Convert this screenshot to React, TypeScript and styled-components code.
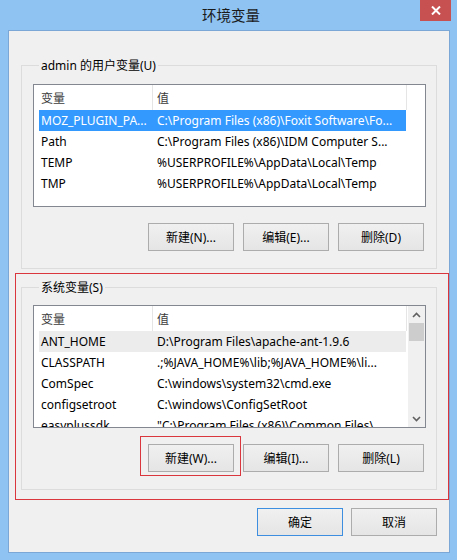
import React from "react";
import styled, { createGlobalStyle } from "styled-components";

const Global = createGlobalStyle`
  html, body { margin: 0; padding: 0; background: #ffffff; }
  body { font-family: "Noto Sans", "Noto Sans CJK SC", sans-serif; font-size: 12px; color: #000; }
  * { box-sizing: border-box; }
`;

const Window = styled.div`
  width: 457px;
  height: 560px;
  background: #8ec3f2;
  display: flex;
  flex-direction: column;
  padding: 0 7px 7px 8px;
`;

const TitleBar = styled.div`
  height: 30px;
  display: flex;
  align-items: flex-start;
  position: relative;
`;

const Title = styled.div`
  flex: 1;
  text-align: center;
  font-family: "Noto Sans CJK SC", sans-serif;
  font-size: 14.5px;
  line-height: 30px;
  color: #1a1a1a;
  padding-left: 4px;
`;

const CloseButton = styled.div`
  position: absolute;
  right: -1px;
  top: 0;
  width: 31px;
  height: 21px;
  background: #c75050;
  display: flex;
  align-items: center;
  justify-content: center;
`;

const Client = styled.div`
  flex: 1;
  background: #f0f0f0;
  border: 1px solid #7aa7d6;
  display: flex;
  flex-direction: column;
`;

const Group = styled.fieldset`
  margin: 0;
  min-inline-size: 0;
  border: 1px solid #dcdcdc;
  padding: 11px 10px 17px 11px;
  display: flex;
  flex-direction: column;
`;

const Legend = styled.legend`
  margin-left: 6px;
  padding: 2px 2px 0 2px;
  font-size: 12px;
  line-height: 14px;
  color: #000;
`;

const UserGroup = styled(Group)`
  margin: 26px 12px 0 12px;
`;

const Annotation = styled.div`
  border: 1px solid #d9363e;
`;

const SystemMark = styled(Annotation)`
  margin: 4px 0 0 6px;
  padding: 5px 11px 9px 5px;
`;

const ButtonMark = styled(Annotation)`
  margin: -8px -7px -4px -8px;
  padding: 7px 6px 3px 7px;
  display: flex;
`;

const SystemGroup = styled(Group)`
  padding-top: 10px;
`;

const ListView = styled.div`
  height: 123px;
  border: 1px solid #828790;
  background: #ffffff;
  display: flex;
  overflow: hidden;
`;

const ListMain = styled.div`
  flex: 1;
  display: flex;
  flex-direction: column;
  min-width: 0;
`;

const HeaderRow = styled.div`
  height: 25px;
  display: flex;
  flex-shrink: 0;
`;

const HeaderCell = styled.div<{ $w: number; $pad: number }>`
  width: ${(p) => p.$w}px;
  flex-shrink: 0;
  border-right: 1px solid #e5e5e5;
  padding-left: ${(p) => p.$pad}px;
  line-height: 25px;
  font-family: "Noto Sans CJK SC", sans-serif;
  font-size: 12px;
  color: #3c3c3c;
`;

const HeaderFill = styled.div`
  flex: 1;
`;

const Body = styled.div`
  flex: 1;
  overflow: hidden;
`;

const Row = styled.div<{ $state?: "selected" | "hover" }>`
  height: 21px;
  margin-left: 5px;
  width: 367px;
  display: flex;
  background: ${(p) =>
    p.$state === "selected" ? "#3399ff" : p.$state === "hover" ? "#ececec" : "transparent"};
  color: ${(p) => (p.$state === "selected" ? "#ffffff" : "#000000")};
`;

const Cell = styled.div<{ $w: number; $pad: number }>`
  width: ${(p) => p.$w}px;
  flex-shrink: 0;
  padding-left: ${(p) => p.$pad}px;
  padding-right: 4px;
  line-height: 21px;
  white-space: nowrap;
  overflow: hidden;
  text-overflow: ellipsis;
`;

const ScrollBar = styled.div`
  width: 17px;
  flex-shrink: 0;
  background: #f0f0f0;
  display: flex;
  flex-direction: column;
`;

const ScrollArrow = styled.div`
  height: 17px;
  display: flex;
  align-items: center;
  justify-content: center;
`;

const ScrollThumb = styled.div`
  height: 18px;
  margin: 0 1px;
  background: #cdcdcd;
`;

const ScrollTrack = styled.div`
  flex: 1;
`;

const ButtonRow = styled.div<{ $top: number; $right: number }>`
  display: flex;
  justify-content: flex-end;
  gap: 9px;
  margin-top: ${(p) => p.$top}px;
  padding-right: ${(p) => p.$right}px;
`;

const Button = styled.button<{ $default?: boolean }>`
  width: 86px;
  height: 28px;
  margin: 0;
  padding: 0;
  border: 1px solid ${(p) => (p.$default ? "#3d8ee0" : "#acacac")};
  background: linear-gradient(#f0f0f0, #e5e5e5);
  font-family: "Noto Sans", "Noto Sans CJK SC", sans-serif;
  font-size: 12px;
  color: #000;
  display: flex;
  align-items: center;
  justify-content: center;
`;

const DialogButtons = styled(ButtonRow)`
  gap: 8px;
`;

type Item = [string, string];

const userVars: Item[] = [
  ["MOZ_PLUGIN_PA...", "C:\\Program Files (x86)\\Foxit Software\\Fo..."],
  ["Path", "C:\\Program Files (x86)\\IDM Computer S..."],
  ["TEMP", "%USERPROFILE%\\AppData\\Local\\Temp"],
  ["TMP", "%USERPROFILE%\\AppData\\Local\\Temp"],
];

const systemVars: Item[] = [
  ["ANT_HOME", "D:\\Program Files\\apache-ant-1.9.6"],
  ["CLASSPATH", ".;%JAVA_HOME%\\lib;%JAVA_HOME%\\li..."],
  ["ComSpec", "C:\\windows\\system32\\cmd.exe"],
  ["configsetroot", "C:\\windows\\ConfigSetRoot"],
  ["easyplussdk", "\"C:\\Program Files (x86)\\Common Files\\..."],
];

const Chevron = ({ up }: { up: boolean }) => (
  <svg width="9" height="6" viewBox="0 0 9 6">
    <path
      d={up ? "M1 5 L4.5 1.5 L8 5" : "M1 1 L4.5 4.5 L8 1"}
      fill="none"
      stroke="#606060"
      strokeWidth="1.6"
    />
  </svg>
);

const VarList = ({
  items,
  highlight,
  state,
  scroll,
}: {
  items: Item[];
  highlight: number;
  state: "selected" | "hover";
  scroll?: boolean;
}) => (
  <ListView>
    <ListMain>
      <HeaderRow>
        <HeaderCell $w={119} $pad={7}>变量</HeaderCell>
        <HeaderCell $w={254} $pad={4}>值</HeaderCell>
        <HeaderFill />
      </HeaderRow>
      <Body>
        {items.map(([k, v], i) => (
          <Row key={k} $state={i === highlight ? state : undefined}>
            <Cell $w={113} $pad={2}>{k}</Cell>
            <Cell $w={254} $pad={5}>{v}</Cell>
          </Row>
        ))}
      </Body>
    </ListMain>
    {scroll && (
      <ScrollBar>
        <ScrollArrow>
          <Chevron up />
        </ScrollArrow>
        <ScrollThumb />
        <ScrollTrack />
        <ScrollArrow>
          <Chevron up={false} />
        </ScrollArrow>
      </ScrollBar>
    )}
  </ListView>
);

export default function App() {
  return (
    <>
      <Global />
      <Window>
        <TitleBar>
          <Title>环境变量</Title>
          <CloseButton>
            <svg width="10" height="9" viewBox="0 0 10 9">
              <path d="M1 0.5 L9 8.5 M9 0.5 L1 8.5" stroke="#ffffff" strokeWidth="2" />
            </svg>
          </CloseButton>
        </TitleBar>
        <Client>
          <UserGroup>
            <Legend>admin 的用户变量(U)</Legend>
            <VarList items={userVars} highlight={0} state="selected" />
            <ButtonRow $top={16} $right={2}>
              <Button>新建(N)...</Button>
              <Button>编辑(E)...</Button>
              <Button>删除(D)</Button>
            </ButtonRow>
          </UserGroup>
          <SystemMark>
            <SystemGroup>
              <Legend>系统变量(S)</Legend>
              <VarList items={systemVars} highlight={0} state="hover" scroll />
              <ButtonRow $top={16} $right={2}>
                <ButtonMark>
                  <Button>新建(W)...</Button>
                </ButtonMark>
                <Button>编辑(I)...</Button>
                <Button>删除(L)</Button>
              </ButtonRow>
            </SystemGroup>
          </SystemMark>
          <DialogButtons $top={8} $right={12}>
            <Button $default>确定</Button>
            <Button>取消</Button>
          </DialogButtons>
        </Client>
      </Window>
    </>
  );
}
